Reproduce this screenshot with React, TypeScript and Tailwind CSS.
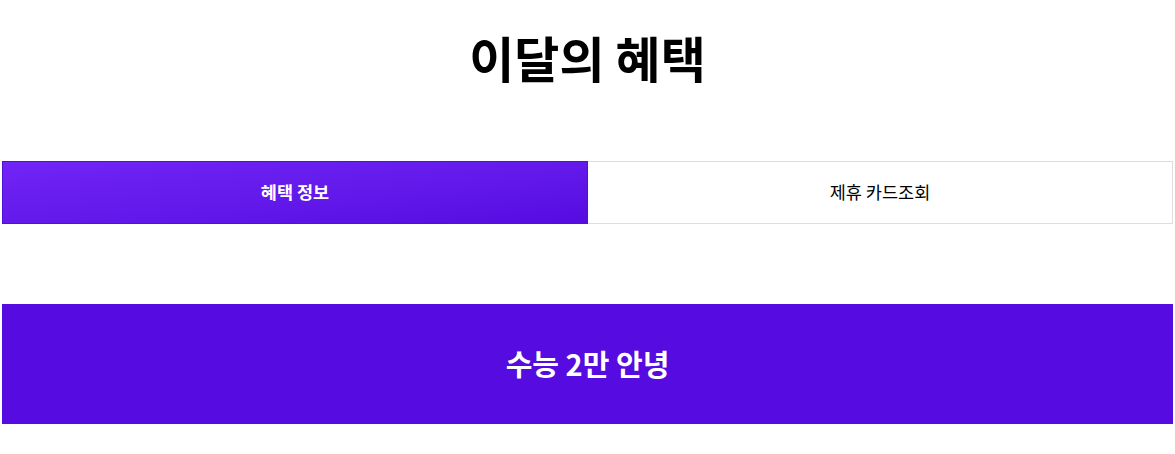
export default function App() {
    const font = { fontFamily: '"Noto Sans CJK KR", "Noto Sans", sans-serif' };

    return (
        <div className="w-[1175px] bg-white" style={font}>
            <div className="w-[1171px] mx-auto">
                {/* Title */}
                <h1 className="pt-[24px] text-center text-[49px] font-bold leading-[66px] text-black">
                    이달의 혜택
                </h1>

                {/* Tabs */}
                <div className="mt-[71px] flex h-[63px]">
                    <button className="flex-1 border border-[#5510d8] bg-gradient-to-br from-[#7124f6] to-[#560be0] text-[17.5px] font-bold text-white">
                        혜택 정보
                    </button>
                    <button className="flex-1 border border-l-0 border-[#dddddd] bg-white text-[17.5px] text-black">
                        제휴 카드조회
                    </button>
                </div>

                {/* Banner */}
                <div className="mt-[80px] flex h-[120px] items-center justify-center bg-[#560be0]">
                    <span className="text-[29px] font-bold text-white">수능 2만 안녕</span>
                </div>
            </div>
        </div>
    );
}
